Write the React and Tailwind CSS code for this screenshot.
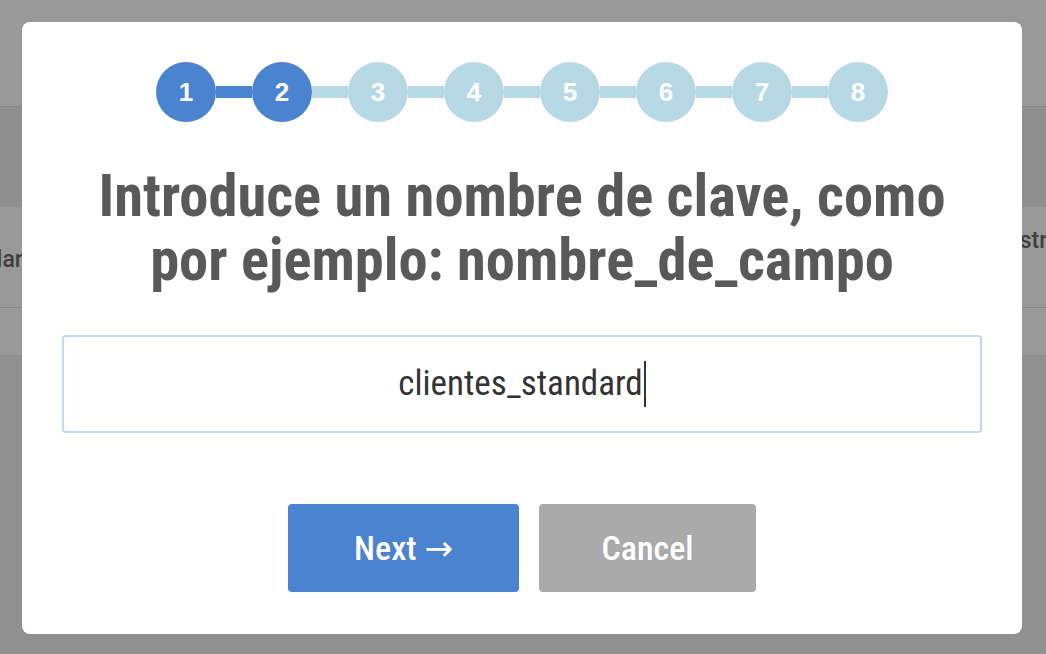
const condensed = {
  fontFamily: "'Roboto Condensed', 'Liberation Sans Narrow', 'DejaVu Sans Condensed', Roboto, sans-serif",
};

const steps = [1, 2, 3, 4, 5, 6, 7, 8];
const current = 2;

function Stepper() {
  return (
    <div className="flex items-center justify-center">
      {steps.map((n, i) => (
        <div key={n} className="flex items-center">
          {i > 0 && (
            <div className={n <= current ? "h-3 w-9 bg-[#4a83d0]" : "h-3 w-9 bg-[#b7d9e5]"} />
          )}
          <div
            className={
              n <= current
                ? "flex h-[60px] w-[60px] items-center justify-center rounded-full bg-[#4a83d0] text-[26px] font-bold text-white"
                : "flex h-[60px] w-[60px] items-center justify-center rounded-full bg-[#b7d9e5] text-[26px] font-bold text-white"
            }
            style={{ fontFamily: "'Liberation Sans', Arial, sans-serif" }}
          >
            {n}
          </div>
        </div>
      ))}
    </div>
  );
}

export default function App() {
  return (
    <div className="relative h-[654px] w-full overflow-hidden bg-[#909090]" style={{ fontFamily: "Roboto, sans-serif" }}>
      {/* page behind the overlay */}
      <div className="flex flex-col">
        <div className="h-[106px] bg-[#999999]" />
        <div className="h-[101px] border-t border-[#868686] bg-[#8f8f8f]" />
        <div className="flex h-[100px] bg-[#999999] text-[23px] font-medium text-[#3f3f3f]">
          <div className="flex w-[23px] justify-end whitespace-nowrap pt-[36px]">Titular</div>
          <div className="flex-1" />
          <div className="w-[23px] whitespace-nowrap pt-[17px]">
            <span className="-ml-[49px]">Registro</span>
          </div>
        </div>
        <div className="h-[48px] border-t border-[#868686] bg-[#999999]" />
      </div>

      {/* modal */}
      <div className="absolute left-[22px] top-[22px] flex h-[612px] w-[1000px] flex-col items-center rounded-lg bg-white px-10 pt-10">
        <Stepper />
        <h1
          className="mt-[42px] whitespace-nowrap text-center text-[58.5px] font-bold leading-[64px] text-[#595959]"
          style={condensed}
        >
          Introduce un nombre de clave, como
          <br />
          por ejemplo: nombre_de_campo
        </h1>
        <div
          className="mt-[43px] flex h-[98px] w-full items-center justify-center rounded border-2 border-[#bcdcef] bg-white text-[35px] text-[#333333]"
          style={condensed}
        >
          <span>clientes_standard</span>
          <span className="ml-px h-[46px] w-[2px] bg-[#333333]" />
        </div>
        <div className="mt-[71px] flex gap-5">
          <button
            className="h-[88px] w-[231px] rounded bg-[#4a83d0] text-[34px] font-medium text-white"
            style={condensed}
          >
            Next{" "}
            <span className="font-normal" style={{ fontFamily: "'DejaVu Sans', sans-serif" }}>
              →
            </span>
          </button>
          <button
            className="h-[88px] w-[217px] rounded bg-[#aaaaaa] text-[34px] font-medium text-white"
            style={condensed}
          >
            Cancel
          </button>
        </div>
      </div>
    </div>
  );
}
